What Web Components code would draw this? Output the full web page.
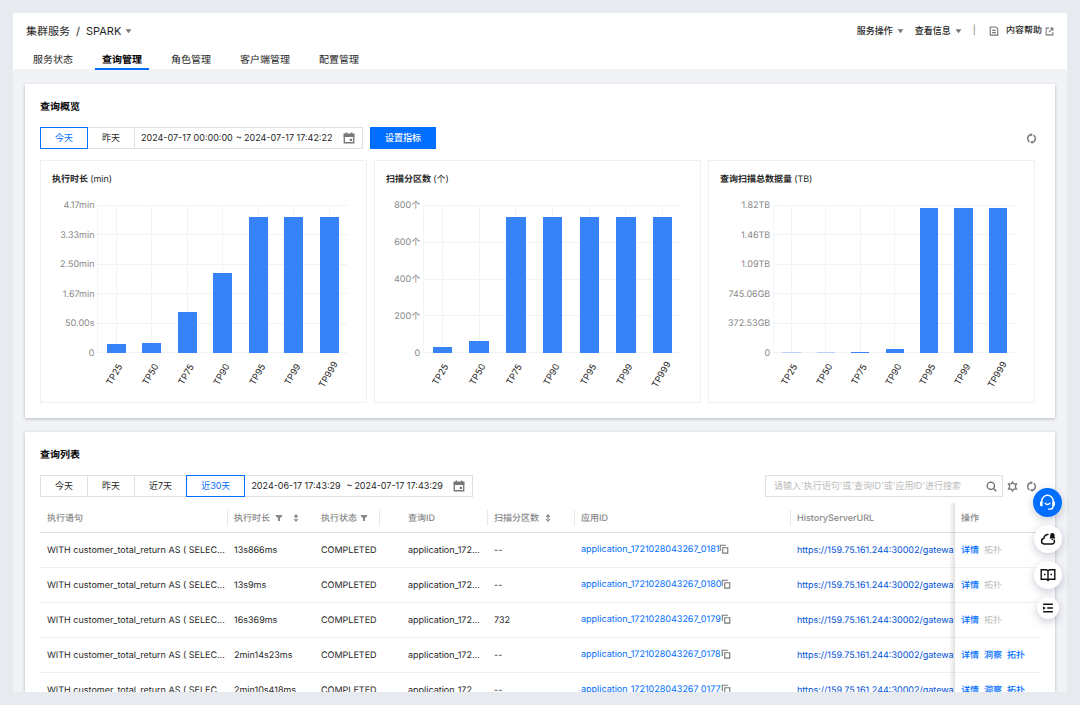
<!DOCTYPE html>
<html lang="zh-CN">
<head>
<meta charset="utf-8">
<meta name="viewport" content="width=device-width, initial-scale=1">
<title>查询管理</title>
<style>
  :root {
    --blue: #006eff;
    --text: #262626;
    --muted: #888;
    --line: #dcdfe6;
    --soft: #eef0f3;
  }

  body {
    margin: 0;
    padding: 13px;
    box-sizing: border-box;
    height: 100vh;
    overflow: hidden;
    background: #e7eaee;
    color: var(--text);
    font-family: Inter, "Noto Sans CJK SC", sans-serif;
    font-size: 9px;
    line-height: 16px;
    text-rendering: geometricPrecision;
  }
</style>
</head>
<body>
<cluster-app></cluster-app>

<script>
// Icon shapes, all drawn with the current colour.
const ICONS = {
  caret: `<path d="M1 2h10L6 9z" fill="currentColor" stroke="none"/>`,
  refresh: `<path d="M5 12.800A5.600 5.600 0 0 1 2.400 8 5.600 5.600 0 0 1 7 2.500M11 3.200A5.600 5.600 0 0 1 13.600 8 5.600 5.600 0 0 1 9 13.500" stroke-width="2"/><path d="M6.500 0v5L10 2.500zM9.500 16v-5L6 13.500z" fill="currentColor" stroke="none"/>`,
  calendar: `<path d="M1.700 3h12.600v11.300H1.700z"/><path d="M1 2.500h14v4H1zM3.500 0.500h2v3h-2zM10.500 0.500h2v3h-2zM9 9h3v3H9z" fill="currentColor" stroke="none"/>`,
  doc: `<path d="M2 1.500h9l3 3v10H2zM5 7h6M5 10.500h6"/>`,
  external: `<path d="M7 2H2v12h12V9M9.500 2H14v4.500M14 2L7 9"/>`,
  search: `<circle cx="7" cy="7" r="5.300"/><path d="M11 11l4 4"/>`,
  gear: `<path d="M8 1.500l1.900 2.700 3.900-.1-1.700 3.300v1.200l1.700 3.300-3.900-.1L8 14.500l-1.900-2.700-3.900.1 1.700-3.300V7.400L2.200 4.100l3.900.1z" stroke-width="1.900"/>`,
  filter: `<path d="M1.500 2h13v2L10 8.500V14H6V8.500L1.500 4z" fill="currentColor" stroke="none"/>`,
  sort: `<path d="M8 0l5 6H3zM8 16l5-6H3zM7 4h2v8H7z" fill="currentColor" stroke="none"/>`,
  copy: `<path d="M6 6h8v8.500H6zM2 11V2h9"/>`,
  headset: `<path d="M2.700 8V6.500a5.300 5.300 0 0 1 10.600 0v4.700q0 3-3.300 3H8.500" stroke-width="1.300"/><path d="M1 7h2.300v4.500H2.200A1.200 1.200 0 0 1 1 10.300zM12.700 7H15v3.300a1.200 1.200 0 0 1-1.200 1.200h-1.100z" fill="currentColor" stroke="none"/><path d="M5.400 8.300Q8 11.500 10.600 8.300" stroke-width="1.300"/>`,
  cloud: `<path d="M8.500 3.600A4 4 0 0 0 3.900 7.300 2.900 2.900 0 0 0 4 13h8a2.600 2.600 0 0 0 1.900-4.200" stroke-width="1.500"/><path d="M9.700 7.500V6.800l.5-.6V4.300a2.200 2.200 0 0 1 4.400 0v1.900l.5.6v.7zM11.600 8h1.600v.9h-1.600z" fill="currentColor" stroke="none"/>`,
  book: `<path d="M8 3.700Q7 2.700 5.500 2.700H1.200v9.500h4.500Q7.200 12.200 8 13.300 8.800 12.200 10.300 12.200h4.500V2.700h-4.300Q9 2.700 8 3.700zM8 3.700V14" stroke-width="1.400"/><path d="M4 7.500h1.500M10.500 7.500H12" stroke-width="1.500"/>`,
  list: `<path d="M1.500 3h13M7 8h7.500M1.500 13h13" stroke-width="1.700"/><path d="M1.500 5.500L5 8l-3.500 2.500z" fill="currentColor" stroke="none"/>`
};

class UiIcon extends HTMLElement {
  constructor() {
    super();
    this.attachShadow({ mode: "open" });
  }

  connectedCallback() {
    const size = this.getAttribute("size") || 10;
    this.shadowRoot.innerHTML = `
      <style>
        :host { display: inline-flex; flex: none; vertical-align: middle; }
        svg { display: block; fill: none; stroke: currentColor; stroke-width: 1.8; }
      </style>
      <svg width="${size}" height="${size}" viewBox="0 0 ${this.getAttribute("name") === "caret" ? "12 12" : "16 16"}" aria-hidden="true">
        ${ICONS[this.getAttribute("name")]}
      </svg>
    `;
  }
}

customElements.define("ui-icon", UiIcon);

class PageHeader extends HTMLElement {
  constructor() {
    super();
    this.attachShadow({ mode: "open" });
  }

  connectedCallback() {
    const tabs = ["服务状态", "查询管理", "角色管理", "客户端管理", "配置管理"];
    const active = this.getAttribute("active");

    this.shadowRoot.innerHTML = `
      <style>
        :host { display: block; background: #fff; padding: 0 13px; }
        button { border: 0; background: none; padding: 0; font: inherit; color: inherit; display: flex; align-items: center; cursor: pointer; }
        .bar { display: flex; align-items: center; justify-content: space-between; height: 36px; }
        .crumbs { display: flex; align-items: center; gap: 6px; font-size: 11px; }
        .crumbs button { gap: 4px; }
        .tools { display: flex; align-items: center; gap: 11px; font-weight: 500; }
        .tools button { gap: 4px; }
        .tools a { display: flex; align-items: center; gap: 3px; padding-left: 2px; color: inherit; text-decoration: none; }
        .tools span { color: #999; }
        .doc { margin: 0 4px 0 0; }
        ui-icon { color: #777; }
        nav { display: flex; gap: 15px; height: 20px; }
        nav a { padding: 0 7px; height: 19px; line-height: 22px; font-size: 10px; color: inherit; text-decoration: none; border-bottom: 2px solid transparent; }
        nav a.active { font-weight: 700; color: #000; border-color: var(--blue); }
      </style>
      <div class="bar">
        <div class="crumbs">
          <div>集群服务</div><div>/</div>
          <button type="button">SPARK <ui-icon name="caret" size="7"></ui-icon></button>
        </div>
        <div class="tools">
          <button type="button">服务操作 <ui-icon name="caret" size="7"></ui-icon></button>
          <button type="button">查看信息 <ui-icon name="caret" size="7"></ui-icon></button>
          <span>|</span>
          <a href="#help"><ui-icon class="doc" name="doc" size="10"></ui-icon>内容帮助 <ui-icon name="external" size="9"></ui-icon></a>
        </div>
      </div>
      <nav>
        ${tabs.map(tab => `<a href="#" class="${tab === active ? "active" : ""}">${tab}</a>`).join("")}
      </nav>
    `;
  }
}

customElements.define("page-header", PageHeader);

// White panel with a heading, the rest is slotted.
class PanelCard extends HTMLElement {
  constructor() {
    super();
    this.attachShadow({ mode: "open" });
  }

  connectedCallback() {
    this.shadowRoot.innerHTML = `
      <style>
        :host { display: block; background: #fff; padding: 15px; box-shadow: 0 1px 3px rgba(40, 50, 80, .3); }
        h2 { margin: 0 0 12px; font-size: 10px; line-height: 16px; font-weight: 700; color: #000; }
      </style>
      <h2>${this.getAttribute("heading")}</h2>
      <slot></slot>
    `;
  }
}

customElements.define("panel-card", PanelCard);

// Preset buttons joined to a from/to date box.
class DateRange extends HTMLElement {
  constructor() {
    super();
    this.attachShadow({ mode: "open" });
  }

  connectedCallback() {
    const presets = this.getAttribute("presets").split(",");
    const active = this.getAttribute("active");

    this.shadowRoot.innerHTML = `
      <style>
        :host { display: flex; height: 22px; }
        button { box-sizing: border-box; font: inherit; color: inherit; background: #fff; border: 1px solid var(--line); padding: 0 14px; margin-right: -1px; cursor: pointer; }
        button.active { color: var(--blue); border-color: var(--blue); position: relative; }
        .range { box-sizing: border-box; display: flex; align-items: center; border: 1px solid var(--line); width: 229px; padding: 0 7px 0 6px; }
        input { border: 0; padding: 0; margin: 0; background: none; outline: 0; font: inherit; color: inherit; width: 95px; min-width: 0; }
        input + span { width: 8px; }
        ui-icon { margin-left: auto; color: #777; }
      </style>
      ${presets.map(name => `<button type="button" class="${name === active ? "active" : ""}">${name}</button>`).join("")}
      <div class="range">
        <input type="text" aria-label="开始时间" value="${this.getAttribute("from")}">
        <span>~</span>
        <input type="text" aria-label="结束时间" value="${this.getAttribute("to")}">
        <ui-icon name="calendar" size="12"></ui-icon>
      </div>
    `;
  }
}

customElements.define("date-range", DateRange);

class BarChart extends HTMLElement {
  constructor() {
    super();
    this.attachShadow({ mode: "open" });
  }

  connectedCallback() {
    const names = ["TP25", "TP50", "TP75", "TP90", "TP95", "TP99", "TP999"];
    const ticks = this.getAttribute("ticks").split(",");
    const values = this.getAttribute("values").split(",");

    this.shadowRoot.innerHTML = `
      <style>
        :host { display: block; box-sizing: border-box; height: 243px; border: 1px solid var(--soft); padding: 11px 19px 0 11px; min-width: 0; }
        h3 { margin: 0 0 17px; font-size: 9px; line-height: 16px; font-weight: 700; }
        h3 span { font-weight: 400; }
        .chart { display: grid; grid-template-columns: max-content 1fr; column-gap: 3px; padding-left: 8px; }
        .axis { display: flex; flex-direction: column; justify-content: space-between; margin: -7px 0 -9px; text-align: right; color: var(--muted); line-height: 16px; }
        .plot { position: relative; height: 148px; display: grid; grid-template-columns: repeat(7, 1fr); border-left: 1px solid #f3f4f6; }
        .lines { position: absolute; inset: 0; display: flex; flex-direction: column; justify-content: space-between; }
        .lines i { height: 1px; background: #f1f2f4; }
        .col { position: relative; display: flex; align-items: flex-end; justify-content: center; background: linear-gradient(#f3f4f6, #f3f4f6) center / 1px 100% no-repeat; }
        .bar { width: 53%; min-height: 1px; background: #3682f7; }
        .bar.faint { background: #b5d2fb; }
        .names { grid-column: 2; display: grid; grid-template-columns: repeat(7, 1fr); padding-top: 14px; }
        .names div { display: flex; justify-content: center; }
        .names span { transform: rotate(-60deg); white-space: nowrap; }
      </style>
      <h3>${this.getAttribute("name")} <span>(${this.getAttribute("unit")})</span></h3>
      <div class="chart">
        <div class="axis">${ticks.map(tick => `<div>${tick}</div>`).join("")}</div>
        <div class="plot">
          <div class="lines">${ticks.map(() => "<i></i>").join("")}</div>
          ${values.map(value => `<div class="col"><div class="bar ${value === "0" ? "faint" : ""}" style="height: ${value}%"></div></div>`).join("")}
        </div>
        <div class="names">${names.map(name => `<div><span>${name}</span></div>`).join("")}</div>
      </div>
    `;
  }
}

customElements.define("bar-chart", BarChart);

class QueryTable extends HTMLElement {
  constructor() {
    super();
    this.attachShadow({ mode: "open" });
  }

  connectedCallback() {
    const rows = [
      { time: "13s866ms", parts: "--", app: "0181" },
      { time: "13s9ms", parts: "--", app: "0180" },
      { time: "16s369ms", parts: "732", app: "0179" },
      { time: "2min14s23ms", parts: "--", app: "0178", insight: true },
      { time: "2min10s418ms", parts: "--", app: "0177", insight: true }
    ];

    this.shadowRoot.innerHTML = `
      <style>
        :host { display: block; margin-top: 6px; }
        table { width: 100%; table-layout: fixed; border-collapse: separate; border-spacing: 0; }
        th, td { box-sizing: border-box; padding: 2px 7px 0; text-align: left; white-space: nowrap; }
        th { height: 30px; font-weight: 500; color: var(--muted); border-bottom: 1px solid var(--line); }
        td { height: 35px; border-bottom: 1px solid var(--soft); }
        th.sep { background: linear-gradient(#e6e8ec, #e6e8ec) left center / 1px 16px no-repeat; }
        th ui-icon { margin-left: 3px; }
        th ui-icon + ui-icon { margin-left: 9px; }
        .query { padding-left: 29px; padding-right: 0; }
        .app { padding-top: 0; }
        .url { padding-right: 0; overflow: hidden; }
        .url a { color: #0052d9; }
        .op { position: relative; background: #fff; }
        .op::before { content: ""; position: absolute; top: 0; bottom: -1px; left: -5px; width: 6px; background: linear-gradient(to right, rgba(0, 0, 0, 0), rgba(0, 0, 0, .12)); }
        .copy { border: 0; background: none; padding: 0; font: inherit; vertical-align: top; color: #777; cursor: pointer; }
        .copy ui-icon { vertical-align: top; margin-top: 2px; }
        a { color: var(--blue); text-decoration: none; }
        .op a, .op span { margin-right: 5px; }
        .op a { font-weight: 500; }
        .op span { color: #bbb; }
        .c1 { width: 187px; } .c2 { width: 87px; } .c3 { width: 65px; }
        .c4 { width: 108px; } .c5 { width: 87px; } .c6 { width: 216px; } .c8 { width: 86px; }
      </style>
      <table>
        <colgroup>
          <col class="c1"><col class="c2"><col class="c3"><col class="c4">
          <col class="c5"><col class="c6"><col><col class="c8">
        </colgroup>
        <thead>
          <tr>
            <th>执行语句</th>
            <th class="sep">执行时长 <ui-icon name="filter" size="8"></ui-icon><ui-icon name="sort" size="8"></ui-icon></th>
            <th>执行状态<ui-icon name="filter" size="8"></ui-icon></th>
            <th class="sep query">查询ID</th>
            <th class="sep">扫描分区数 <ui-icon name="sort" size="8"></ui-icon></th>
            <th class="sep">应用ID</th>
            <th class="sep">HistoryServerURL</th>
            <th class="op">操作</th>
          </tr>
        </thead>
        <tbody>
          ${rows.map(row => `
          <tr>
            <td>WITH customer_total_return AS ( SELEC...</td>
            <td>${row.time}</td>
            <td>COMPLETED</td>
            <td class="query">application_172...</td>
            <td>${row.parts}</td>
            <td class="app"><a href="#app">application_1721028043267_${row.app}</a><button type="button" class="copy" aria-label="复制"><ui-icon name="copy" size="10"></ui-icon></button></td>
            <td class="url"><a href="#history">https://159.75.161.244:30002/gateway/</a></td>
            <td class="op"><a href="#detail">详情</a>${row.insight ? `<a href="#insight">洞察</a><a href="#topo">拓扑</a>` : `<span>拓扑</span>`}</td>
          </tr>`).join("")}
        </tbody>
      </table>
    `;
  }
}

customElements.define("query-table", QueryTable);

class SearchBox extends HTMLElement {
  constructor() {
    super();
    this.attachShadow({ mode: "open" });
  }

  connectedCallback() {
    this.shadowRoot.innerHTML = `
      <style>
        :host { box-sizing: border-box; display: flex; align-items: center; width: 238px; height: 22px; border: 1px solid var(--line); padding: 0 5px 0 8px; }
        input { flex: 1; min-width: 0; border: 0; padding: 0; outline: 0; background: none; font: inherit; color: inherit; }
        input::placeholder { color: #bbb; }
        button { display: flex; border: 0; padding: 0; background: none; color: #666; cursor: pointer; }
      </style>
      <input type="text" aria-label="搜索" placeholder="${this.getAttribute("placeholder")}">
      <button type="button" aria-label="搜索"><ui-icon name="search" size="11"></ui-icon></button>
    `;
  }
}

customElements.define("search-box", SearchBox);

// Round shortcut buttons that float over the page.
class FloatTools extends HTMLElement {
  constructor() {
    super();
    this.attachShadow({ mode: "open" });
  }

  connectedCallback() {
    this.shadowRoot.innerHTML = `
      <style>
        :host { position: fixed; right: 18px; bottom: 86px; display: flex; flex-direction: column; align-items: center; gap: 8px; }
        button { display: flex; align-items: center; justify-content: center; width: 28px; height: 28px; padding: 0; border: 0; border-radius: 50%; background: #fff; color: #111; box-shadow: 0 3px 8px rgba(50, 60, 90, .25); cursor: pointer; }
        .main { width: 29px; height: 29px; background: var(--blue); color: #fff; }
        .small { width: 22px; height: 22px; }
      </style>
      <button type="button" class="main" aria-label="在线客服"><ui-icon name="headset" size="17"></ui-icon></button>
      <button type="button" aria-label="云通知"><ui-icon name="cloud" size="16"></ui-icon></button>
      <button type="button" aria-label="文档"><ui-icon name="book" size="16"></ui-icon></button>
      <button type="button" class="small" aria-label="收起"><ui-icon name="list" size="12"></ui-icon></button>
    `;
  }
}

customElements.define("float-tools", FloatTools);

class ClusterApp extends HTMLElement {
  constructor() {
    super();
    this.attachShadow({ mode: "open" });
  }

  connectedCallback() {
    this.shadowRoot.innerHTML = `
      <style>
        :host { display: flex; flex-direction: column; height: 100%; overflow: hidden; background: #f2f3f7; }
        page-header, panel-card { flex: none; }
        main { flex: 1; min-height: 0; display: flex; flex-direction: column; gap: 14px; padding: 15px 12px 0; }
        .row { display: flex; align-items: center; gap: 7px; margin-right: 3px; }
        .finder { display: flex; align-items: center; gap: 4px; }
        .icons { display: flex; align-items: center; gap: 8px; }
        .icon { display: flex; border: 0; padding: 0; background: none; color: #777; cursor: pointer; }
        .primary { height: 22px; padding: 0 15px; border: 0; background: var(--blue); color: #fff; font: inherit; font-weight: 500; cursor: pointer; }
        .push { margin-left: auto; }
        .charts { display: grid; grid-template-columns: repeat(3, 1fr); gap: 7px; margin: 11px 5px 0 0; }
      </style>
      <page-header active="查询管理"></page-header>
      <main>
        <panel-card heading="查询概览">
          <div class="row">
            <date-range presets="今天,昨天" active="今天" from="2024-07-17 00:00:00" to="2024-07-17 17:42:22"></date-range>
            <button type="button" class="primary">设置指标</button>
            <button type="button" class="icon push" aria-label="刷新"><ui-icon name="refresh" size="11"></ui-icon></button>
          </div>
          <div class="charts">
            <bar-chart name="执行时长" unit="min" ticks="4.17min,3.33min,2.50min,1.67min,50.00s,0" values="6,7,28,54,92,92,92"></bar-chart>
            <bar-chart name="扫描分区数" unit="个" ticks="800个,600个,400个,200个,0" values="4,8,92,92,92,92,92"></bar-chart>
            <bar-chart name="查询扫描总数据量" unit="TB" ticks="1.82TB,1.46TB,1.09TB,745.06GB,372.53GB,0" values="0,0,1,3,98,98,98"></bar-chart>
          </div>
        </panel-card>
        <panel-card heading="查询列表">
          <div class="row">
            <date-range presets="今天,昨天,近7天,近30天" active="近30天" from="2024-06-17 17:43:29" to="2024-07-17 17:43:29"></date-range>
            <div class="finder push">
              <search-box placeholder="请输入'执行语句'或'查询ID'或'应用ID'进行搜索"></search-box>
              <div class="icons">
                <button type="button" class="icon" aria-label="设置"><ui-icon name="gear" size="11"></ui-icon></button>
                <button type="button" class="icon" aria-label="刷新"><ui-icon name="refresh" size="11"></ui-icon></button>
              </div>
            </div>
          </div>
          <query-table></query-table>
        </panel-card>
      </main>
      <float-tools></float-tools>
    `;
  }
}

customElements.define("cluster-app", ClusterApp);
</script>
</body>
</html>
